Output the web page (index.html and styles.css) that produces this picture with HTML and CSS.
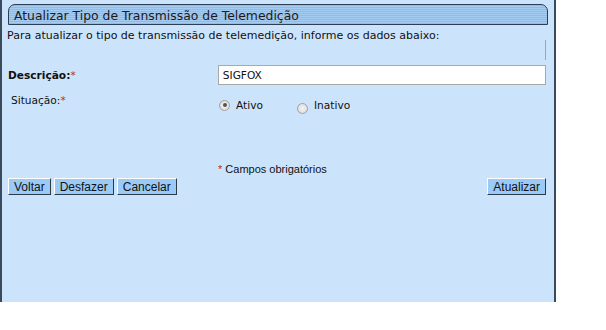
FILE: index.html
```html
<!DOCTYPE html>
<html>
<head>
<meta charset="utf-8">
<title>Atualizar Tipo de Transmissão de Telemedição</title>
<link rel="stylesheet" href="styles.css">
</head>
<body>
<div class="painel">
   <div class="titulo">Atualizar Tipo de Transmissão de Telemedição</div>
   <p class="intro">Para atualizar o tipo de transmissão de telemedição, informe os dados abaixo:</p>
   <div class="linha-lateral"></div>

   <div class="campo campo-descricao">
      <label class="rotulo negrito">Descrição:<span class="obrig">*</span></label>
      <input class="texto" type="text" value="SIGFOX">
   </div>

   <div class="campo campo-situacao">
      <label class="rotulo">Situação:<span class="obrig">*</span></label>
      <div class="opcoes">
         <span class="opcao"><span class="radio marcado"></span>Ativo</span>
         <span class="opcao opcao-baixa"><span class="radio"></span>Inativo</span>
      </div>
   </div>

   <p class="legenda"><span class="obrig">*</span> Campos obrigatórios</p>

   <div class="botoes">
      <div class="grupo">
         <button class="botao">Voltar</button>
         <button class="botao">Desfazer</button>
         <button class="botao">Cancelar</button>
      </div>
      <button class="botao">Atualizar</button>
   </div>
</div>
</body>
</html>
```

FILE: styles.css
```css
body {
   margin: 0;
   background-color: white;
   font-family: 'DejaVu Sans', Verdana, sans-serif;
}

.painel {
   width: 556px;
   height: 302px;
   box-sizing: border-box;
   background-color: #cce4fb;
   border-left: 2px solid #3a4a5c;
   border-right: 2px solid #3a4a5c;
   padding: 4px 8px 0 4px;
   position: relative;
}

.titulo {
   height: 21px;
   box-sizing: border-box;
   margin: 0 -2px 0 2px;
   padding: 3px 0 0 5px;
   border: 1px solid #2e3e52;
   border-top-left-radius: 7px;
   border-top-right-radius: 7px;
   background: repeating-linear-gradient(to bottom, #8dbdee 0, #8dbdee 1px, #a4cbf2 1px, #a4cbf2 2px);
   font-size: 12.4px;
   line-height: 15px;
   color: #1a1a1a;
   white-space: nowrap;
}

.intro {
   margin: 4px 0 0 1px;
   font-size: 11px;
   color: #111;
}

.linha-lateral {
   position: absolute;
   left: 543px;
   top: 40px;
   width: 1px;
   height: 20px;
   background: #9aa6b2;
}

.campo {
   display: flex;
   align-items: center;
}

.rotulo {
   width: 211px;
   font-size: 10.6px;
   color: #111;
}

.negrito {
   font-weight: bold;
}

.obrig {
   color: #c0282a;
   font-weight: normal;
}

.campo-descricao {
   margin-top: 23px;
   padding-left: 2px;
}

.texto {
   width: 330px;
   height: 20px;
   box-sizing: border-box;
   border: 1px solid #a9a9a9;
   background: white;
   padding: 0 4px;
   font-family: 'DejaVu Sans', Verdana, sans-serif;
   font-size: 10.6px;
   color: #111;
   margin: 0;
}

.campo-situacao {
   margin-top: 9px;
   padding-left: 5px;
   align-items: flex-start;
}

.campo-situacao .rotulo {
   width: 208px;
}

.opcoes {
   display: flex;
   padding-top: 2px;
}

.opcao {
   display: flex;
   align-items: center;
   font-size: 10.6px;
   color: #111;
   width: 78px;
}

.opcao-baixa .radio {
   margin-top: 7px;
}

.radio {
   width: 9px;
   height: 9px;
   border: 1px solid #a0a0a0;
   border-radius: 50%;
   background: radial-gradient(circle, #f4f4f4 0, #d8d8d8 100%);
   margin: 0 6px 0 0;
   position: relative;
}

.marcado::after {
   content: "";
   position: absolute;
   left: 2.5px;
   top: 2.5px;
   width: 4px;
   height: 4px;
   border-radius: 50%;
   background: #555;
}

.legenda {
   margin: 49px 0 0 212px;
   font-family: 'Liberation Sans', Arial, sans-serif;
   font-size: 11px;
   color: #111;
}

.botoes {
   display: flex;
   justify-content: space-between;
   margin-top: 3px;
   padding-left: 2px;
}

.grupo {
   display: flex;
   gap: 3px;
}

.botao {
   height: 17px;
   padding: 0 5px;
   margin: 0;
   background: #9ccaf6;
   border: 1px solid;
   border-color: #ffffff #2c3a48 #2c3a48 #ffffff;
   font-family: 'Liberation Sans', Arial, sans-serif;
   font-size: 12px;
   color: #111;
   line-height: 14px;
}
```
